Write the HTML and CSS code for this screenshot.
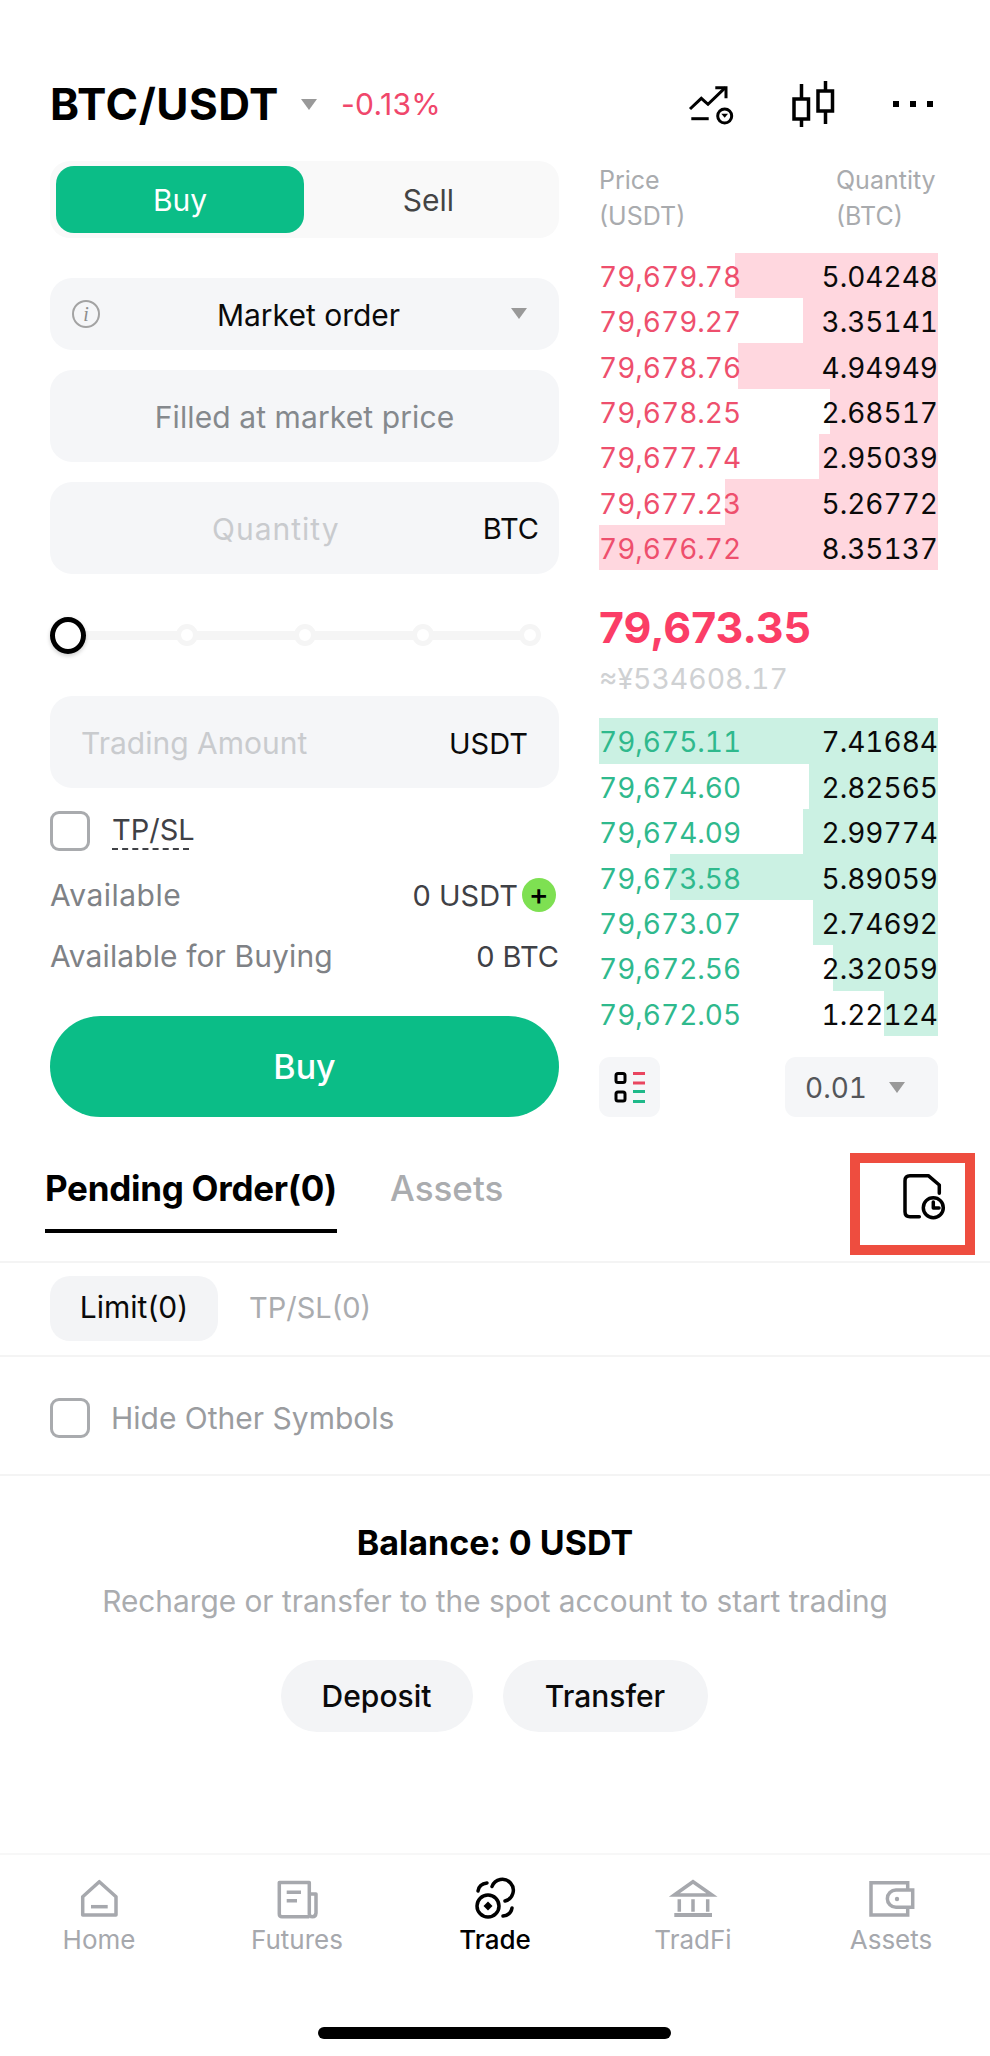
FILE: index.html
```html
<!DOCTYPE html>
<html lang="en">
<head>
<meta charset="utf-8">
<title>BTC/USDT</title>
<link rel="stylesheet" href="styles.css">
</head>
<body>
<div class="page">
  <header class="top">
    <div class="symbol">BTC/USDT</div>
    <span class="tri tri-head"></span>
    <div class="change">-0.13%</div>
    <div class="top-icons">
      <svg class="ic-chart" width="50" height="42" viewBox="0 0 50 42" fill="none" stroke="#000" stroke-width="3"><path d="M2 26 13.3 15.3 20 21.3 37.3 4.7"/><path d="M27.3 4.7H38V15.3"/><path d="M3.3 35.7H20.7"/><circle cx="36.7" cy="33" r="7"/><path d="M33.3 30.7H40L36.7 34.7Z" fill="#000" stroke="none"/></svg>
      <svg class="ic-candle" width="44" height="46" viewBox="0 0 44 46" fill="none" stroke="#000" stroke-width="3.5"><rect x="2" y="18" width="14.500" height="20"/><path d="M9.500 3V18M9.500 38V46"/><rect x="26" y="10" width="14.500" height="20"/><path d="M33.500 0V10M33.500 30V43"/></svg>
      <div class="more"><i></i><i></i><i></i></div>
    </div>
  </header>

  <main class="trade">
    <section class="form">
      <div class="toggle"><div class="side side-on">Buy</div><div class="side">Sell</div></div>
      <div class="field field-select"><span class="info">i</span><span class="select-label">Market order</span><span class="tri tri-select"></span></div>
      <div class="field field-tall field-center">Filled at market price</div>
      <div class="field field-tall"><span class="ph ph-qty">Quantity</span><span class="unit">BTC</span></div>
      <div class="slider">
        <span class="thumb"></span>
        <span class="dot d1"></span><span class="dot d2"></span><span class="dot d3"></span><span class="dot d4"></span>
      </div>
      <div class="field field-tall field-amt"><span class="ph ph-amt">Trading Amount</span><span class="unit unit-usdt">USDT</span></div>
      <div class="check-row"><span class="box"></span><span class="tpsl">TP/SL</span></div>
      <div class="info-row r1"><span>Available</span><span class="val">0 USDT<span class="plus">+</span></span></div>
      <div class="info-row r2"><span>Available for Buying</span><span class="val">0 BTC</span></div>
      <button class="buy">Buy</button>
    </section>

    <section class="book">
      <div class="book-head"><div>Price<br>(USDT)</div><div class="qty-head">Quantity<br>(BTC)</div></div>
      <div class="rows asks">
        <div class="row"><span class="bar" style="width:59.9%"></span><span class="p">79,679.78</span><span class="q">5.04248</span></div>
        <div class="row"><span class="bar" style="width:39.8%"></span><span class="p">79,679.27</span><span class="q">3.35141</span></div>
        <div class="row"><span class="bar" style="width:59%"></span><span class="p">79,678.76</span><span class="q">4.94949</span></div>
        <div class="row"><span class="bar" style="width:31.9%"></span><span class="p">79,678.25</span><span class="q">2.68517</span></div>
        <div class="row"><span class="bar" style="width:35.1%"></span><span class="p">79,677.74</span><span class="q">2.95039</span></div>
        <div class="row"><span class="bar" style="width:62.8%"></span><span class="p">79,677.23</span><span class="q">5.26772</span></div>
        <div class="row"><span class="bar" style="width:100%"></span><span class="p">79,676.72</span><span class="q">8.35137</span></div>
      </div>
      <div class="mid">79,673.35</div>
      <div class="fiat">≈¥534608.17</div>
      <div class="rows bids">
        <div class="row"><span class="bar" style="width:100%"></span><span class="p">79,675.11</span><span class="q">7.41684</span></div>
        <div class="row"><span class="bar" style="width:38%"></span><span class="p">79,674.60</span><span class="q">2.82565</span></div>
        <div class="row"><span class="bar" style="width:39.8%"></span><span class="p">79,674.09</span><span class="q">2.99774</span></div>
        <div class="row"><span class="bar" style="width:79%"></span><span class="p">79,673.58</span><span class="q">5.89059</span></div>
        <div class="row"><span class="bar" style="width:36.9%"></span><span class="p">79,673.07</span><span class="q">2.74692</span></div>
        <div class="row"><span class="bar" style="width:31%"></span><span class="p">79,672.56</span><span class="q">2.32059</span></div>
        <div class="row"><span class="bar" style="width:15.9%"></span><span class="p">79,672.05</span><span class="q">1.22124</span></div>
      </div>
      <div class="book-ctl">
        <div class="ctl-icon">
          <svg width="40" height="40" viewBox="0 0 40 40" fill="none" stroke-width="3"><rect x="6" y="6.500" width="9" height="9" rx="2" stroke="#000"/><rect x="6" y="25" width="9" height="9" rx="2" stroke="#000"/><path d="M23 6.500H35M23 16H35" stroke="#e9455f"/><path d="M23 24.500H35M23 34.500H35" stroke="#1fb98a"/></svg>
        </div>
        <div class="ctl-step"><span>0.01</span><span class="tri tri-step"></span></div>
      </div>
    </section>
  </main>

  <nav class="tabs">
    <div class="tab tab-on">Pending Order(0)</div>
    <div class="tab">Assets</div>
    <div class="red-box"><svg width="50" height="50" viewBox="0 0 50 50" fill="none" stroke="#000" stroke-width="3.500" stroke-linecap="round" stroke-linejoin="round"><path d="M39.300 23.300V15L28.300 5.700H10Q5 5.700 5 10.700V41.700Q5 46.700 10 46.700H19.300"/><circle cx="33.300" cy="37.700" r="10"/><path d="M33.300 32V38H39"/></svg></div>
  </nav>
  <div class="subtabs"><div class="sub sub-on">Limit(0)</div><div class="sub">TP/SL(0)</div></div>
  <div class="hide-row"><span class="box"></span><span>Hide Other Symbols</span></div>

  <section class="balance">
    <h2>Balance: 0 USDT</h2>
    <p>Recharge or transfer to the spot account to start trading</p>
    <div class="actions"><button class="act act-dep">Deposit</button><button class="act act-tr">Transfer</button></div>
  </section>

  <footer class="nav">
    <div class="nav-item">
      <svg width="50" height="50" viewBox="0 0 50 50" fill="none" stroke="#a6a8ad" stroke-width="3.500" stroke-linejoin="round"><path d="M25.300 6.700 42 21.700V40H8.700V21.700Z"/><path d="M17 31.700H33.700"/></svg>
      <span>Home</span>
    </div>
    <div class="nav-item">
      <svg width="50" height="50" viewBox="0 0 50 50" fill="none" stroke="#a6a8ad" stroke-width="3.500" stroke-linejoin="round"><path d="M37.300 41.700H10Q7.300 41.700 7.300 39V7.500H37.300V39Q37.300 41.700 40.500 41.700T44 38V19H37.300"/><path d="M14.700 17.300H29M14.700 25.700H25"/></svg>
      <span>Futures</span>
    </div>
    <div class="nav-item nav-on">
      <svg width="50" height="50" viewBox="0 0 50 50" fill="none" stroke="#000" stroke-width="3.500" stroke-linecap="round"><circle cx="18" cy="31" r="11"/><path d="M22 11.500A11 11 0 1 1 35 26"/><path d="M8 16Q9 9 17 8"/><path d="M42 33Q41 40 33 41"/><path d="M18 26.500 22.500 31 18 35.500 13.500 31Z" fill="#000" stroke="none"/></svg>
      <span>Trade</span>
    </div>
    <div class="nav-item">
      <svg width="50" height="50" viewBox="0 0 50 50" fill="none" stroke="#a6a8ad" stroke-width="3.500"><path d="M6.300 20 25 6.700 44 20Z"/><path d="M11.300 24.300V36.700M25 24.300V36.700M39.700 24.300V36.700" /><path d="M6.300 40H44" stroke-width="4"/></svg>
      <span>TradFi</span>
    </div>
    <div class="nav-item">
      <svg width="50" height="50" viewBox="0 0 50 50" fill="none" stroke="#a6a8ad" stroke-width="3.500"><path d="M41.700 15V7.700H5V40H41.700V32.300"/><path d="M30 15H46.700V32.300H30A8.600 8.600 0 0 1 30 15Z"/><circle cx="31" cy="24" r="2.200" fill="#a6a8ad" stroke="none"/></svg>
      <span>Assets</span>
    </div>
  </footer>
  <div class="home-bar"></div>
</div>
</body>
</html>
```
FILE: styles.css
```css
* { box-sizing: border-box; }
html, body { margin: 0; padding: 0; background: #fff; }
.page { width: 990px; height: 2056px; font-family: Inter, "Liberation Sans", sans-serif; color: #000; overflow: hidden; display: flex; flex-direction: column; }

.tri { display: block; width: 0; height: 0; border-left: 8px solid transparent; border-right: 8px solid transparent; border-top: 11px solid #999; }

.top { height: 48px; margin: 80px 0 33px; padding: 0 50px; display: flex; align-items: center; }
.symbol { font-size: 44px; font-weight: 700; line-height: 48px; letter-spacing: 0.5px; width: 228px; white-space: nowrap; }
.tri-head { margin: 0 0 0 23px; }
.change { margin-left: 24px; font-size: 30px; letter-spacing: 0.3px; color: #f0476b; }
.top-icons { margin-left: auto; display: flex; align-items: center; margin-right: -9px; }
.ic-chart { margin-right: 54px; }
.ic-candle { margin-right: 57px; }
.more { display: flex; gap: 11px; width: 42px; margin-right: 14px; }
.more i { display: block; width: 6px; height: 6px; background: #000; }

.trade { display: flex; padding-left: 50px; height: 956px; }
.form { width: 509px; display: flex; flex-direction: column; }
.toggle { height: 77px; background: #f9f9f9; border-radius: 20px; padding: 5px 6px; display: flex; }
.side { width: 248px; flex: none; display: flex; align-items: center; justify-content: center; font-size: 30px; color: #444; border-radius: 18px; padding-top: 2px; }
.side + .side { width: 249px; }
.side-on { background: #0bbd87; color: #fff; }

.field { background: #f5f6f8; border-radius: 22px; display: flex; align-items: center; position: relative; font-size: 30px; }
.field-select { height: 72px; margin-top: 40px; padding: 0 32px 0 22px; }
.field-tall { height: 92px; margin-top: 20px; padding: 2px 31px 0; }
.field-center { justify-content: center; color: #85898d; padding: 2px 0 0; letter-spacing: 0.1px; }
.field-amt { margin-top: 43px; }
.info { width: 28px; height: 28px; border-radius: 50%; border: 2px solid #a3a3a3; color: #8e8e8e; font: italic 20px/24px "Liberation Serif", serif; text-align: center; flex: none; }
.select-label { flex: 1; text-align: center; padding: 2px 0 0 6px; color: #0a0a0a; }
.tri-select { flex: none; }
.ph { color: #c9cbce; }
.ph-qty { margin-left: 131px; letter-spacing: 1px; }
.unit { margin-left: auto; font-size: 29px; color: #0a0a0a; margin-right: -11px; }
.unit-usdt { margin-right: 0; }

.slider { position: relative; height: 37px; margin-top: 43px; background: linear-gradient(#f5f5f5, #f5f5f5) 0 14px / 480px 9px no-repeat; width: 509px; }
.thumb { position: absolute; left: 0; top: 0; width: 36px; height: 37px; border-radius: 50%; background: #fff; border: 5px solid #000; box-shadow: 0 2px 4px rgba(0,0,0,.2); }
.dot { position: absolute; top: 7px; width: 22px; height: 22px; border-radius: 50%; background: #fff; border: 5px solid #f5f5f5; }
.d1 { left: 126px; } .d2 { left: 244px; } .d3 { left: 362px; } .d4 { left: 469px; }

.box { width: 40px; height: 40px; flex: none; border: 3.500px solid #a9abae; border-radius: 9px; background: #fff; }
.check-row { display: flex; align-items: center; gap: 22px; height: 40px; margin-top: 23px; }
.tpsl { font-size: 29px; line-height: 36px; color: #3f4146; border-bottom: 2px dashed #3f4146; width: 77px; white-space: nowrap; }
.info-row { display: flex; justify-content: space-between; align-items: center; height: 40px; font-size: 30px; letter-spacing: 0.1px; color: #7f8286; }
.r1 span:first-child { letter-spacing: 0.5px; }
.r1 { margin-top: 24px; } .r2 { margin-top: 21px; }
.val { color: #3f4146; display: flex; align-items: center; font-size: 29px; letter-spacing: 0; }
.plus { width: 34px; height: 34px; border-radius: 50%; background: #7ee052; color: #000; margin: 0 3px 0 4px; font: 500 30px/33px Inter, sans-serif; text-align: center; }
.buy { height: 101px; margin-top: 40px; border: 0; border-radius: 51px; background: #0bbd87; color: #fff; font: 500 34px Inter, sans-serif; padding: 0; }

.book { width: 339px; margin-left: 40px; display: flex; flex-direction: column; }
.book-head { height: 92px; display: flex; justify-content: space-between; font-size: 25px; line-height: 36px; color: #a9abae; padding: 1px 0 0; }
.qty-head { width: 102px; white-space: nowrap; }
.rows { display: flex; flex-direction: column; }
.row { position: relative; height: 45.400px; display: flex; justify-content: space-between; align-items: center; font-size: 28px; font-variant-numeric: tabular-nums; padding: 3px 0 0; }
.bar { position: absolute; right: 0; top: 0; bottom: 0; }
.p, .q { position: relative; }
.q { color: #0a0a0a; }
.asks .bar { background: #ffd7df; }
.asks .p { color: #ee4f6d; }
.bids .bar { background: #cbf1e3; }
.bids .p { color: #2fb98d; }
.mid { font-size: 43px; font-weight: 700; color: #fb3d66; line-height: 48px; margin-top: 33px; }
.fiat { font-size: 28.400px; font-variant-numeric: tabular-nums; color: #cfd1d3; line-height: 36px; margin-top: 10px; }
.bids { margin-top: 21px; }
.book-ctl { display: flex; justify-content: space-between; margin-top: 21px; height: 60px; }
.ctl-icon { width: 61px; height: 60px; background: #f5f6f8; border-radius: 11px; display: flex; align-items: center; justify-content: center; }
.ctl-step { width: 153px; height: 60px; background: #f5f6f8; border-radius: 11px; display: flex; align-items: center; font-size: 28px; font-variant-numeric: tabular-nums; color: #54565a; padding: 2px 0 0 20px; }
.tri-step { margin: -2px 0 0 22px; }

.tabs { position: relative; height: 146px; border-bottom: 2px solid #f4f4f4; display: flex; padding: 51px 0 0 45px; gap: 53px; flex: none; }
.tab { height: 65px; font-size: 35px; line-height: 40px; color: #aaacaf; font-weight: 500; }
.tab-on { color: #000; font-weight: 700; border-bottom: 4px solid #000; height: 65px; letter-spacing: -0.27px; }
.red-box { position: absolute; left: 850px; top: 36px; width: 125px; height: 102px; border: 10px solid #ee4d3f; background: #fff; padding: 7px 0 0 40px; }

.subtabs { height: 94px; border-bottom: 2px solid #f4f4f4; padding: 13px 0 0 50px; display: flex; gap: 31px; flex: none; }
.sub { height: 65px; line-height: 63px; font-size: 29px; color: #aaacaf; }
.sub-on { width: 168px; background: #f3f4f6; border-radius: 20px; color: #0a0a0a; text-align: center; font-size: 30px; }

.hide-row { height: 119px; border-bottom: 2px solid #f4f4f4; padding: 4px 0 0 50px; display: flex; align-items: center; gap: 21px; font-size: 30px; color: #9a9c9f; flex: none; }

.balance { height: 377px; display: flex; flex-direction: column; align-items: center; flex: none; }
.balance h2 { margin: 47px 0 0; font-size: 34px; line-height: 40px; font-weight: 700; }
.balance p { margin: 18px 0 0; font-size: 29.800px; line-height: 40px; color: #aaacaf; }
.actions { display: flex; gap: 30px; margin: 39px 0 0 -2px; }
.act { height: 72px; border: 0; border-radius: 36px; background: #f3f4f6; font: 500 30px Inter, sans-serif; color: #0a0a0a; padding: 0; }
.act-dep { width: 192px; }
.act-tr { width: 205px; }

.nav { height: 104px; border-top: 2px solid #f7f7f7; padding-top: 20px; display: grid; grid-template-columns: repeat(5, 198px); flex: none; }
.nav-item { display: flex; flex-direction: column; align-items: center; font-size: 26px; line-height: 30px; color: #a6a8ad; }
.nav-on { color: #000; font-weight: 500; }
.home-bar { width: 353px; height: 12px; border-radius: 6px; background: #000; margin: 70px 0 0 318px; flex: none; }
```
